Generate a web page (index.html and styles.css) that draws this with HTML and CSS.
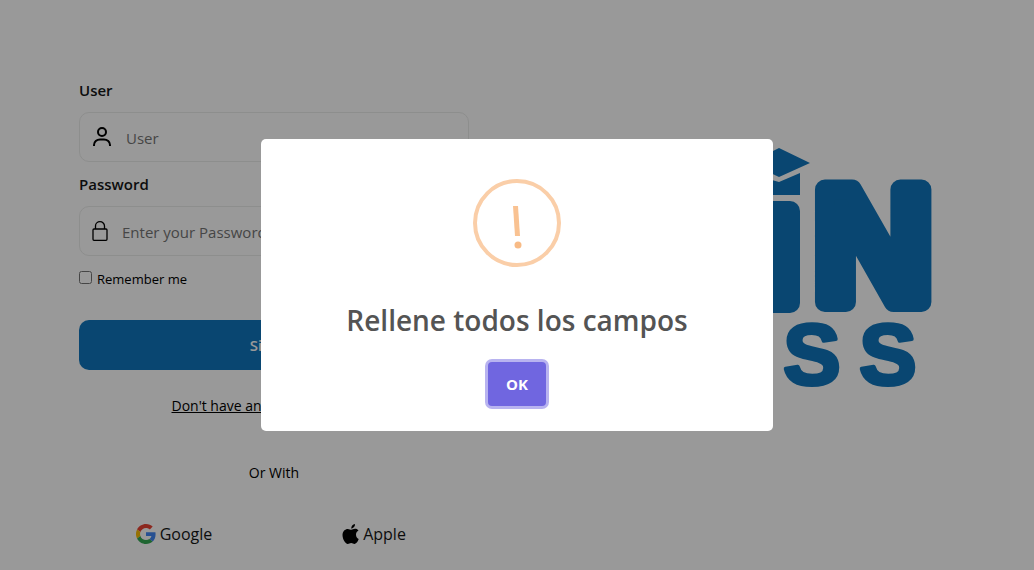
FILE: index.html
```html
<!DOCTYPE html>
<html lang="es">
<head>
<meta charset="utf-8">
<title>Login</title>
<link rel="stylesheet" href="styles.css">
</head>
<body>
<main class="page">
  <form class="form">
    <label class="label" for="user">User</label>
    <div class="field">
      <svg class="icon-user" viewBox="0 0 20 20" fill="none" stroke="#000" stroke-width="2"><circle cx="10" cy="5" r="4"/><path d="M2 19v-1a6 5.500 0 0 1 6-5.500h4a6 5.500 0 0 1 6 5.500v1"/></svg>
      <input class="input" id="user" type="text" placeholder="User">
    </div>
    <label class="label" for="password">Password</label>
    <div class="field">
      <svg class="icon-lock" viewBox="0 0 16 20" fill="none" stroke="#000" stroke-width="1.300"><rect x="1" y="8" width="14" height="11.300" rx="1"/><path d="M3.500 8V5a4.500 4.300 0 0 1 9 0v3"/></svg>
      <input class="input" id="password" type="password" placeholder="Enter your Password">
    </div>
    <div class="remember">
      <input class="check" id="remember" type="checkbox">
      <label for="remember">Remember me</label>
    </div>
    <button class="submit" type="button">Sign In</button>
    <a class="signup" href="#">Don't have an account? Sign Up</a>
    <p class="or">Or With</p>
    <div class="providers">
      <button class="provider" type="button">
        <svg class="icon-google" viewBox="0 0 48 48"><path fill="#EA4335" d="M24 9.500c3.540 0 6.710 1.220 9.210 3.600l6.850-6.850C35.900 2.380 30.470 0 24 0 14.620 0 6.510 5.380 2.560 13.220l7.980 6.190C12.430 13.720 17.740 9.500 24 9.500z"/><path fill="#4285F4" d="M46.980 24.550c0-1.570-.15-3.090-.38-4.550H24v9.020h12.940c-.58 2.960-2.260 5.480-4.780 7.180l7.730 6c4.510-4.180 7.090-10.360 7.090-17.650z"/><path fill="#FBBC05" d="M10.530 28.590a14.500 14.500 0 0 1 0-9.180l-7.980-6.190a24 24 0 0 0 0 21.560z"/><path fill="#34A853" d="M24 48c6.480 0 11.930-2.130 15.890-5.810l-7.730-6c-2.150 1.450-4.920 2.300-8.160 2.300-6.260 0-11.570-4.220-13.470-9.910l-7.980 6.190C6.510 42.620 14.620 48 24 48z"/></svg>
        Google
      </button>
      <button class="provider" type="button">
        <svg class="icon-apple" viewBox="0 0 17 20"><path d="M14 10.600c0-2 1.100-3.100 2.500-4C15.500 5.100 14.200 4.800 13 4.800c-1.500 0-2.700.9-3.600.9S7.200 4.900 5.800 4.900C3.200 4.900.5 7 .5 11c0 4.300 3 8.900 5.200 8.900 1.300 0 2-.8 3.500-.8s2 .8 3.400.8c1.900 0 3.300-2.600 4.100-4.800-1.800-.8-2.700-2.400-2.700-4.500zM9.300 4.700C9 2.500 10.800.4 13 .1c.2 2.300-1.500 4.400-3.700 4.600z"/></svg>
        Apple
      </button>
    </div>
  </form>
  <svg class="logo" viewBox="0 0 320 240" fill="#1076bc" stroke="#1076bc" stroke-width="0" role="img" aria-label="iN SS">
    <path d="M169 0l31 15-31 14-30-14zM148 28l21 6 21-9v22h-42z"/>
    <rect x="149" y="53" width="41" height="112" rx="10"/>
    <text class="logo-n" x="204" y="154">N</text>
    <text class="logo-s" x="202" y="236" text-anchor="middle">S</text>
    <text class="logo-s" x="278" y="236" text-anchor="middle">S</text>
  </svg>
</main>
<div class="overlay">
  <section class="modal" role="dialog" aria-modal="true" aria-labelledby="modal-title">
    <svg class="warning" viewBox="0 0 88 88"><circle cx="44" cy="44" r="42" fill="none" stroke="#facea8" stroke-width="4"/><path fill="#f8bb86" fill-opacity=".9" d="M40 27h5l2 30h-5z"/><circle cx="45" cy="66" r="3.500" fill="#f8bb86"/></svg>
    <h2 class="title" id="modal-title">Rellene todos los campos</h2>
    <button class="ok" type="button">OK</button>
  </section>
</div>
</body>
</html>
```
FILE: styles.css
```css
* { box-sizing: border-box; }
body {
  margin: 0;
  background: #fff;
  color: #000;
  font: 14px/20px "Open Sans", "Noto Sans", sans-serif;
}
button, input { font: inherit; }
.page {
  display: flex;
  justify-content: space-between;
  align-items: flex-start;
  min-height: 100vh;
  padding: 78px 104px 24px 79px;
}
.form {
  display: flex;
  flex-direction: column;
  flex: 0 1 390px;
}
.label {
  font-size: 15px;
  line-height: 24px;
  font-weight: 600;
  color: #151717;
}
.field {
  display: flex;
  align-items: center;
  height: 50px;
  margin: 10px 0;
  padding-left: 12px;
  border: 1px solid #ecedec;
  border-radius: 10px;
}
.icon-user { width: 20px; height: 20px; }
.icon-lock { width: 16px; height: 20px; }
.input {
  flex: 1;
  min-width: 0;
  margin-left: 12px;
  padding: 4px 2px 2px;
  border: 0;
  outline: 0;
  background: none;
  font-size: 15px;
}
.input::placeholder { color: #757575; }
.remember {
  display: flex;
  align-items: flex-start;
  gap: 5px;
  margin-top: 3px;
  font-size: 13px;
}
.check { width: 13px; height: 13px; margin: 2px 0 0; }
.submit {
  height: 50px;
  margin-top: 31px;
  border: 0;
  border-radius: 10px;
  background: #1076bc;
  color: #fff;
  font-size: 15px;
  font-weight: 600;
}
.signup {
  align-self: center;
  margin-top: 26px;
  color: #000;
}
.or { margin: 47px 0 0; text-align: center; }
.providers {
  display: grid;
  grid-template-columns: 1fr 1fr;
  gap: 10px;
  margin-top: 41px;
}
.provider {
  display: flex;
  justify-content: center;
  align-items: center;
  gap: 4px;
  padding: 0;
  border: 0;
  background: none;
  color: #151717;
  font-size: 16px;
}
.icon-google { width: 20px; height: 20px; }
.icon-apple { width: 17px; height: 20px; }
.logo {
  flex: 0 1 320px;
  min-width: 0;
  margin-top: 70px;
  overflow: visible;
}
.logo text {
  font-family: "Liberation Sans", Arial, sans-serif;
  font-weight: 700;
  stroke-linejoin: round;
}
.logo-n { font-size: 164px; stroke-width: 20px; }
.logo-s { font-size: 86px; stroke-width: 4px; }
.overlay {
  position: fixed;
  inset: 0;
  display: flex;
  justify-content: center;
  align-items: center;
  background: rgba(0, 0, 0, .4);
}
.modal {
  display: flex;
  flex-direction: column;
  align-items: center;
  width: 512px;
  max-width: 100%;
  padding: 40px 20px 25px;
  border-radius: 5px;
  background: #fff;
}
.warning { width: 88px; height: 88px; }
.title {
  margin: 32px 0 21px;
  color: #545454;
  font-size: 28px;
  line-height: 42px;
  font-weight: 600;
}
.ok {
  width: 58px;
  height: 44px;
  padding: 0;
  border: 0;
  border-radius: 4px;
  background: #7066e0;
  box-shadow: 0 0 0 3px #b8b3f0;
  color: #fff;
  font-size: 15px;
  font-weight: 700;
}
```
